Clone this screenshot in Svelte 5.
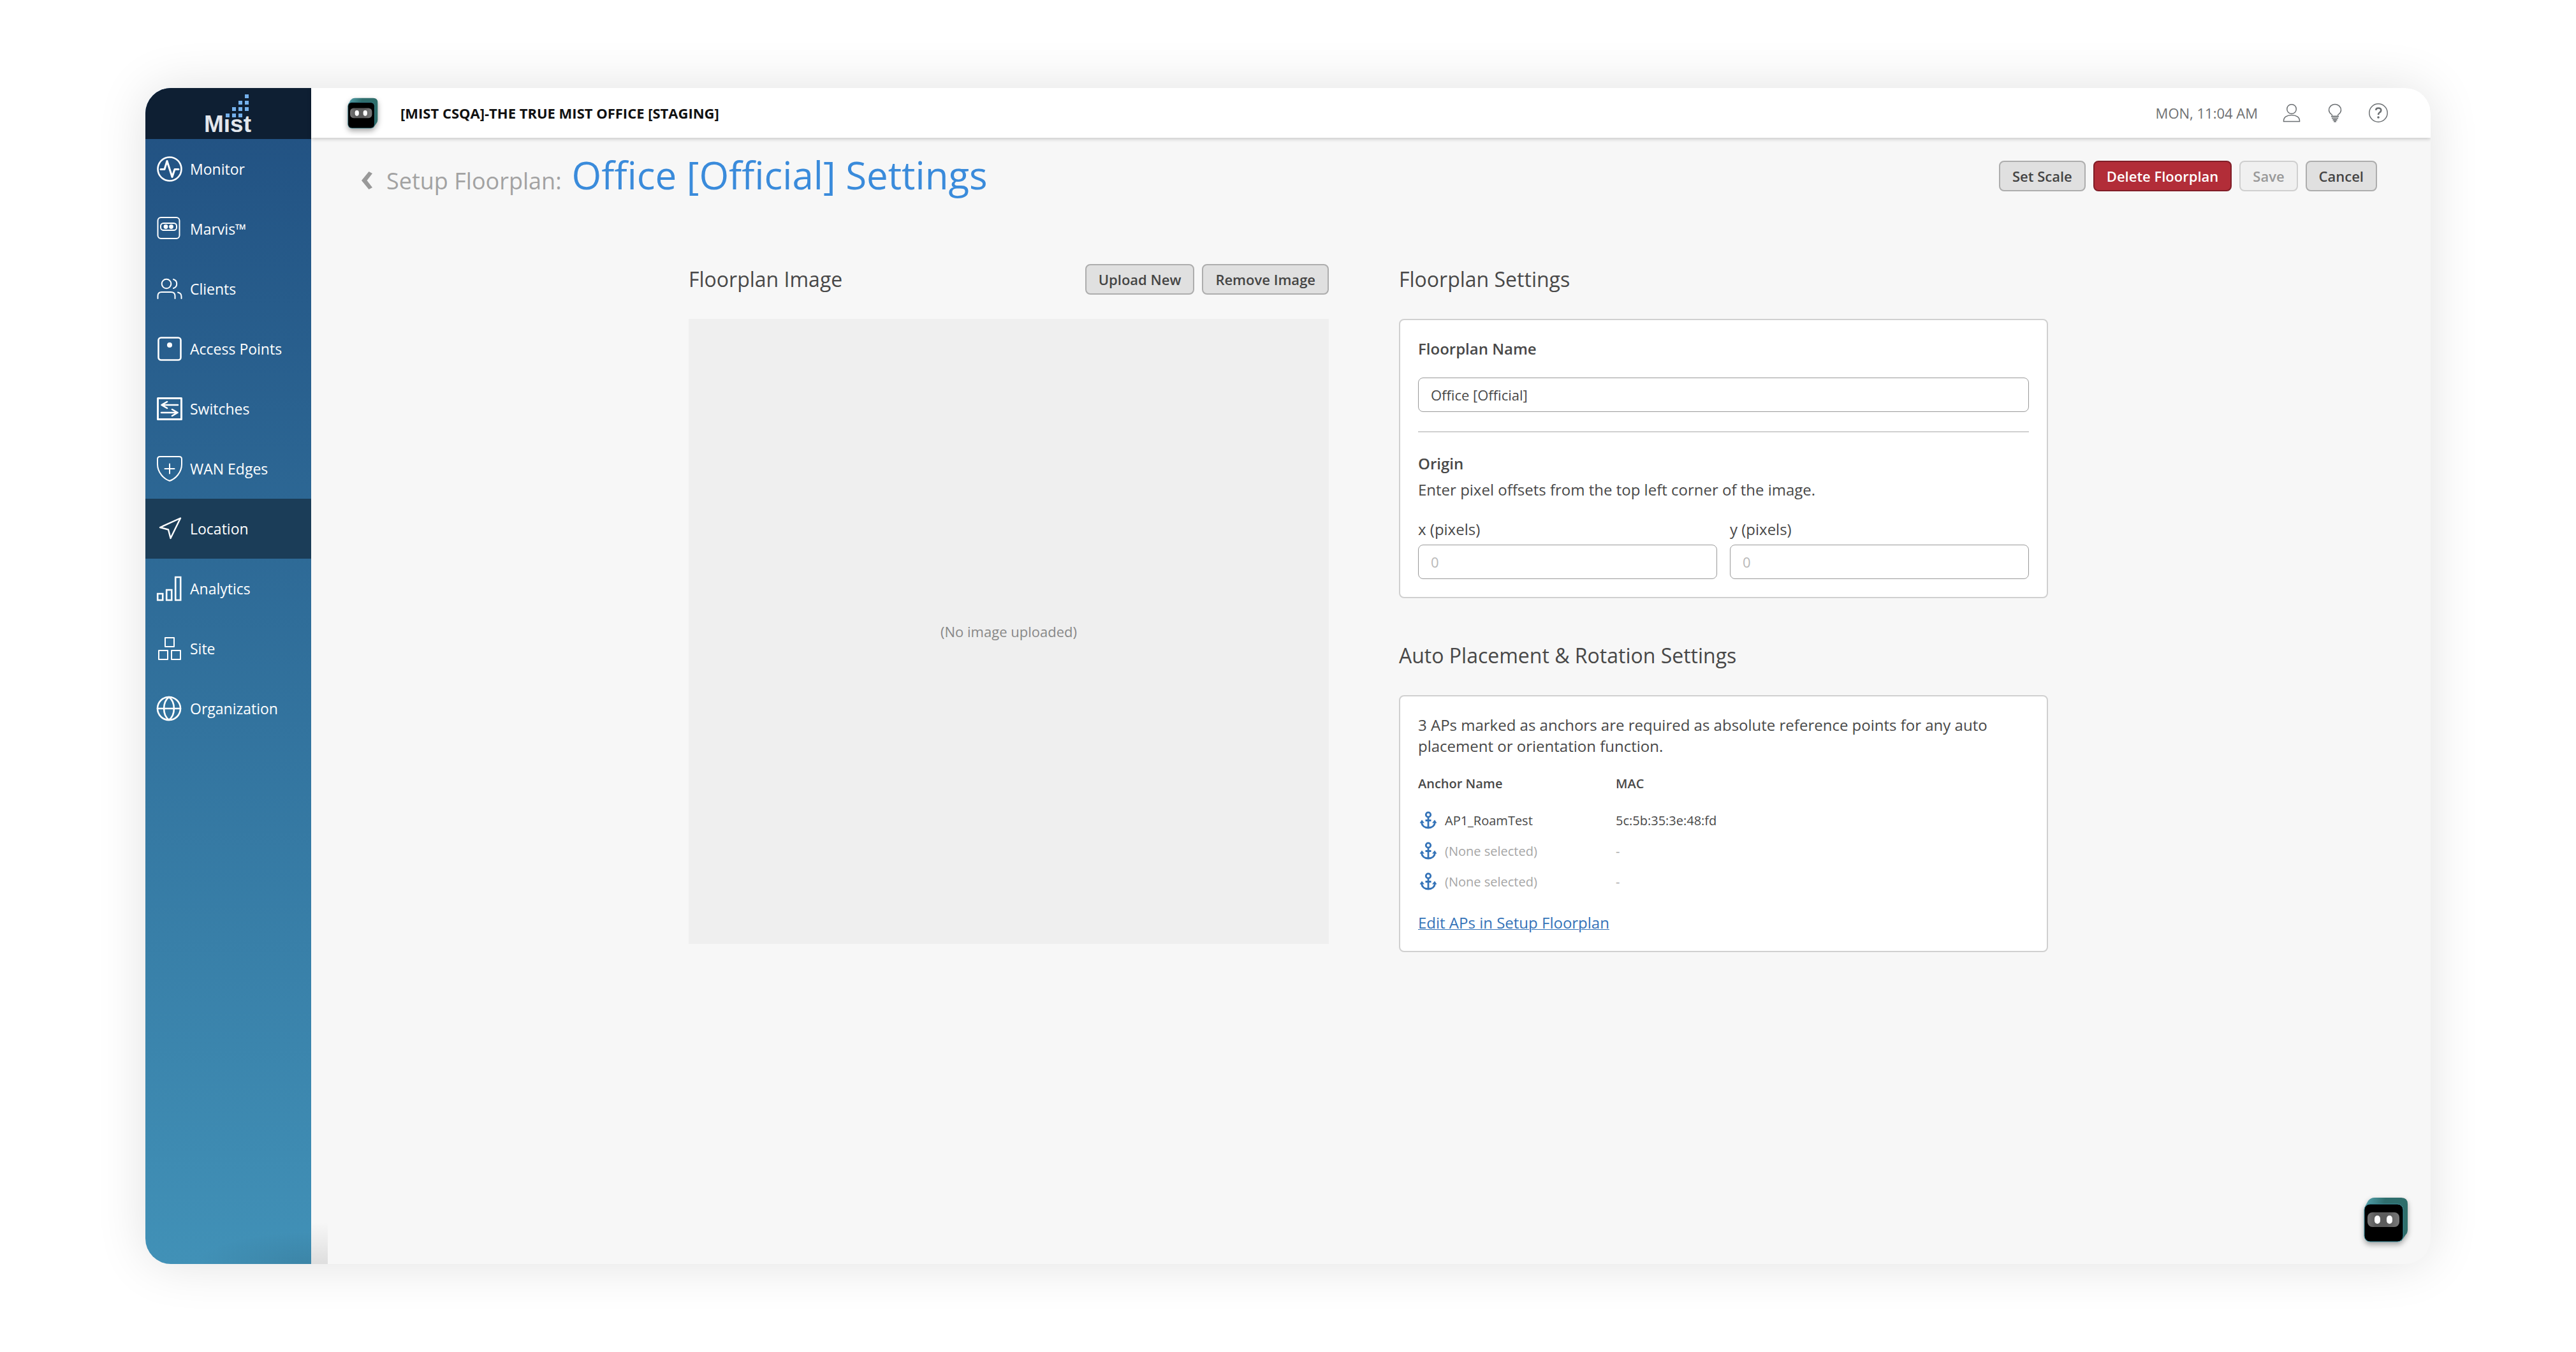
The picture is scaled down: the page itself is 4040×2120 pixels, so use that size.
<script>
  const nav = ['Monitor', 'Marvis™', 'Clients', 'Access Points', 'Switches', 'WAN Edges', 'Location', 'Analytics', 'Site', 'Organization'];
  const active = 'Location';
  const anchors = [
    { name: 'AP1_RoamTest', mac: '5c:5b:35:3e:48:fd' },
    { name: '', mac: '' },
    { name: '', mac: '' }
  ];
  // Centres of the blue squares rising out of the wordmark
  const dots = [[129, 43], [139, 43], [149, 43], [139, 33], [149, 33], [159, 33], [149, 23], [159, 23], [159, 13]];
  let floorplanName = $state('Office [Official]');
  let originX = $state('');
  let originY = $state('');
</script>

{#snippet robot(id)}
  <svg class="robot" viewBox="2 1 70 71" aria-hidden="true">
    <defs>
      <linearGradient id="{id}-side" x1="0" x2="1" y1="0" y2="0.3">
        <stop offset="0" stop-color="#56a5b0" /><stop offset="0.45" stop-color="#2f6e6e" /><stop offset="1" stop-color="#2f6e6a" />
      </linearGradient>
      <linearGradient id="{id}-visor" x1="0" x2="1" y1="0" y2="0">
        <stop offset="0" stop-color="#777" /><stop offset="0.25" stop-color="#5c5c5c" /><stop offset="0.6" stop-color="#5c5c5c" /><stop offset="1" stop-color="#7a7a7a" />
      </linearGradient>
    </defs>
    <path d="M4 16 L9 7 Q13 2 19 2 H61 Q71 2 71 12 V52 Q71 57 68 60 L61 70 Z" fill="url(#{id}-side)" />
    <rect x="3" y="12" width="61" height="59" rx="9" fill="#000" stroke="#3f94a4" />
    <rect x="8" y="25" width="50" height="23" rx="8" fill="url(#{id}-visor)" />
    <rect x="19" y="30" width="9" height="13" rx="5" fill="#fff" />
    <rect x="38" y="30" width="9" height="13" rx="5" fill="#fff" />
  </svg>
{/snippet}

{#snippet icon(name)}
  <svg class="icon" viewBox="0 0 40 40" fill="none" stroke="#fff" stroke-width="2" stroke-linecap="round" stroke-linejoin="round" aria-hidden="true">
    {#if name === 'Monitor'}
      <circle cx="20" cy="20" r="18.5" stroke-width="2.6" />
      <path d="M6 20.5H12L16 7.5L24 32.5L28 20.5H34" stroke-width="3" />
    {:else if name === 'Marvis™'}
      <rect x="1.5" y="2" width="34" height="33" rx="5" />
      <rect x="6" y="11" width="25" height="11" rx="4.5" />
      <circle cx="14" cy="16.5" r="3.4" fill="#fff" stroke="none" />
      <circle cx="22.5" cy="16.5" r="3.4" fill="#fff" stroke="none" />
    {:else if name === 'Clients'}
      <circle cx="15" cy="12" r="7.3" />
      <path d="M1.5 35V31Q1.500 25 7.500 25H22Q28.500 25 28.500 31V35M26 5A7.300 7.300 0 0 1 26 19M33 25.500Q38.500 26.500 38.500 32V35" />
    {:else if name === 'Access Points'}
      <rect x="2.5" y="2.5" width="35" height="35" rx="4" stroke-width="2.6" />
      <circle cx="20" cy="14" r="4" fill="#fff" stroke="none" />
    {:else if name === 'Switches'}
      <rect x="1.5" y="3.5" width="37" height="33" stroke-width="3" />
      <path d="M33 14H7.500M16 9L7.500 14L16 19M7 26H32.500M24 21L32.500 26L24 31" stroke-width="2.6" />
    {:else if name === 'WAN Edges'}
      <path d="M5 1H35Q39 1 39 5V13C39 26 29 36 20 39C11 36 1 26 1 13V5Q1 1 5 1Z" />
      <path d="M20 12.500V27.500M12.500 20H27.500" />
    {:else if name === 'Location'}
      <path d="M37 3.500L5 18L18 21.500L21.500 35Z" stroke-width="2.4" />
    {:else if name === 'Analytics'}
      <path d="M1.200 28H9.200V38H1.200ZM15.200 22H23.200V38H15.200ZM29.200 2H37.200V38H29.200Z" stroke-width="2.6" stroke-linejoin="miter" />
    {:else if name === 'Site'}
      <path d="M13 3H27V17H13ZM3 23H17V37H3ZM23 23H37V37H23Z" />
    {:else}
      <circle cx="19" cy="20" r="18" stroke-width="2.6" />
      <path d="M1 20H37M19 2C8.500 10 8.500 30 19 38M19 2C29.500 10 29.500 30 19 38" stroke-width="2.6" />
    {/if}
  </svg>
{/snippet}

<div class="page">
  <div class="window">
    <aside>
      <a class="brand" href="#home" aria-label="Mist home">
        <svg viewBox="0 0 260 80" aria-hidden="true">
          <text x="92" y="69" class="wordmark">Mist</text>
          <rect x="124" y="38" width="10" height="9" fill="#0e1f33" />
          {#each dots as [x, y]}
            <rect x={x - 3} y={y - 3} width="6" height="6" fill="#74b0ec" />
          {/each}
        </svg>
      </a>
      <nav>
        {#each nav as item}
          <a href="#{item}" class:active={item === active}>{@render icon(item)}<span>{item}</span></a>
        {/each}
      </nav>
    </aside>

    <div class="body">
      <header>
        {@render robot('org')}
        <strong>[MIST CSQA]-THE TRUE MIST OFFICE [STAGING]</strong>
        <div class="tools">
          <time>MON, 11:04 AM</time>
          <button class="tool" type="button" aria-label="Account">
            <svg viewBox="0 0 30 30"><circle cx="15" cy="9" r="7.300" /><path d="M2.500 28.500H27.500C28 21.500 22 18.500 15 18.500S2 21.500 2.500 28.500Z" /></svg>
          </button>
          <button class="tool" type="button" aria-label="Tips">
            <svg viewBox="0 0 30 30"><path d="M11 19C9 16.500 5.500 15 5.500 10.700A9.500 9.300 0 0 1 24.500 10.700C24.500 15 21 16.500 19 19" /><path d="M9 20.500H21M10 23.300H20M11.500 26H18.500M13 28.500H17" stroke-width="1.8" /></svg>
          </button>
          <button class="tool" type="button" aria-label="Help">
            <svg viewBox="0 0 30 30"><circle cx="15" cy="15" r="14.2" /><path d="M11 10.800Q11.500 7.500 15 7.500Q19.300 7.500 19.300 11Q19.300 13 16.800 14.500Q15 15.600 15 18" stroke-width="2.6" /><circle cx="15" cy="22" r="1.8" class="dot" /></svg>
          </button>
        </div>
      </header>

      <main>
        <div class="titlebar">
          <a class="back" href="#floorplan">
            <svg viewBox="0 0 20 28" aria-hidden="true"><path d="M14.500 0L20 3L11.500 14L20 25L14.500 28L3 14Z" fill="#999" /></svg>
            <span>Setup Floorplan:</span>
          </a>
          <h1>Office [Official] Settings</h1>
          <div class="actions">
            <button type="button" class="btn">Set Scale</button>
            <button type="button" class="btn danger">Delete Floorplan</button>
            <button type="button" class="btn" disabled>Save</button>
            <button type="button" class="btn">Cancel</button>
          </div>
        </div>

        <div class="columns">
          <section>
            <div class="head">
              <h2>Floorplan Image</h2>
              <div class="pair">
                <button type="button" class="btn">Upload New</button>
                <button type="button" class="btn">Remove Image</button>
              </div>
            </div>
            <div class="image">(No image uploaded)</div>
          </section>

          <div class="settings">
            <section>
              <div class="head"><h2>Floorplan Settings</h2></div>
              <form class="card">
                <label class="strong" for="floorplan-name">Floorplan Name</label>
                <input id="floorplan-name" type="text" bind:value={floorplanName} />
                <hr />
                <h3>Origin</h3>
                <p class="hint">Enter pixel offsets from the top left corner of the image.</p>
                <div class="fields">
                  <div>
                    <label for="origin-x">x (pixels)</label>
                    <input id="origin-x" type="text" placeholder="0" bind:value={originX} />
                  </div>
                  <div>
                    <label for="origin-y">y (pixels)</label>
                    <input id="origin-y" type="text" placeholder="0" bind:value={originY} />
                  </div>
                </div>
              </form>
            </section>

            <section>
              <div class="head"><h2>Auto Placement &amp; Rotation Settings</h2></div>
              <div class="card">
                <p>3 APs marked as anchors are required as absolute reference points for any auto placement or orientation function.</p>
                <table>
                  <thead>
                    <tr><th scope="col">Anchor Name</th><th scope="col">MAC</th></tr>
                  </thead>
                  <tbody>
                    {#each anchors as anchor}
                      <tr class:empty={!anchor.name}>
                        <td>
                          <div class="anchor">
                            <svg viewBox="0 0 28 28" fill="none" stroke="#3473b8" stroke-width="2.8" aria-hidden="true">
                              <circle cx="14" cy="5.500" r="3.700" />
                              <path d="M14 9V26M9.500 14.500H18.500M3.500 17.500C4 22.500 8 26 14 26S24 22.500 24.500 17.500" />
                              <path d="M0.500 18.500L4 13.500L8 18.500ZM20 18.500L24 13.500L27.500 18.500Z" fill="#3473b8" stroke="none" />
                            </svg>
                            {anchor.name || '(None selected)'}
                          </div>
                        </td>
                        <td>{anchor.mac || '-'}</td>
                      </tr>
                    {/each}
                  </tbody>
                </table>
                <a class="edit" href="#setup">Edit APs in Setup Floorplan</a>
              </div>
            </section>
          </div>
        </div>
      </main>
    </div>

    <div class="status-shade"></div>
    <button class="assistant" type="button" aria-label="Open Marvis assistant">{@render robot('chat')}</button>
  </div>
</div>

<style>
  :global(body) { background: #fff; }
  .page {
    box-sizing: border-box;
    display: flex;
    min-height: 100vh;
    padding: 138px 228px;
    font: 24px/33px "Open Sans", "Noto Sans", sans-serif;
    color: #484848;
  }
  .page :global(*) { box-sizing: border-box; }
  .page svg { display: block; flex: none; overflow: visible; }
  h1, h2, h3, p { margin: 0; }
  button, input { font: inherit; color: inherit; }

  .window {
    position: relative;
    display: flex;
    flex: 1;
    border-radius: 40px;
    overflow: hidden;
    background: #f7f7f7;
    box-shadow: 0 0 80px rgba(0, 0, 0, 0.12);
  }

  aside {
    flex: none;
    width: 260px;
    background:
      radial-gradient(ellipse 180px 50px at 100% 100%, rgba(30, 60, 70, 0.14), transparent),
      linear-gradient(#215081, #4191b7);
  }
  .brand { display: block; height: 80px; background: #0e1f33; }
  .wordmark { font: bold 37px "Liberation Sans", sans-serif; fill: #e3e7ec; }
  nav a {
    display: flex;
    align-items: center;
    gap: 12px;
    height: 94px;
    padding-left: 18px;
    color: #fff;
    font-size: 23px;
    font-weight: 500;
    text-decoration: none;
  }
  nav a.active { background: #1b3d58; }
  .icon { width: 40px; height: 40px; }

  .body { flex: 1; min-width: 0; }
  header {
    position: relative;
    display: flex;
    align-items: center;
    height: 78px;
    padding: 0 67px 0 57px;
    background: #fff;
    box-shadow: 0 2px 6px rgba(0, 0, 0, 0.2);
  }
  .robot { width: 100%; filter: drop-shadow(0 4px 4px rgba(0, 0, 0, 0.35)); }
  header .robot { width: 48px; }
  header strong { margin-left: 35px; color: #111; font-size: 22px; font-weight: 700; }
  .tools { display: flex; align-items: center; gap: 38px; margin-left: auto; }
  time { color: #6e7072; font-size: 22px; }
  .tool { width: 30px; padding: 0; border: 0; background: none; }
  .tool svg { fill: none; stroke: #6c7073; stroke-width: 1.5; }
  .tool .dot { fill: #6c7073; stroke: none; }

  main { padding: 16px 84px 60px 76px; }
  .titlebar { display: flex; align-items: baseline; height: 88px; }
  .back {
    display: flex;
    align-items: baseline;
    gap: 22px;
    color: #a2a2a2;
    font-size: 36px;
    text-decoration: none;
  }
  .back svg { width: 20px; height: 28px; }
  h1 { margin-left: 16px; color: #3a8bdb; font-size: 60px; font-weight: 400; line-height: 84px; }
  .actions { display: flex; align-self: center; gap: 12px; margin-left: auto; }
  .btn {
    height: 48px;
    padding: 0 19px;
    border: 2px solid #adadad;
    border-radius: 8px;
    background: #e0e0e0;
    color: #444;
    font-size: 22px;
    font-weight: 600;
    line-height: 30px;
    white-space: nowrap;
  }
  .btn.danger { border-color: #801d27; background: #b22d38; color: #fff; }
  .btn:disabled { border-color: #cfcfcf; background: #f0f0f0; color: #999; }

  .columns {
    display: grid;
    grid-template-columns: 1004fr 1018fr;
    gap: 110px;
    align-items: start;
    max-width: 2132px;
    margin: 94px auto 0;
  }
  .head { display: flex; align-items: center; height: 48px; margin-bottom: 38px; }
  h2 { font-size: 32px; font-weight: 400; line-height: 48px; }
  .pair { display: flex; gap: 12px; margin-left: auto; }
  .image {
    display: grid;
    place-items: center;
    height: 980px;
    background: #efefef;
    color: #888;
    font-size: 22px;
    font-weight: 500;
  }
  .settings { display: grid; gap: 66px; }
  .card {
    display: block;
    padding: 28px;
    border: 2px solid #d0d0d0;
    border-radius: 8px;
    background: #fff;
  }
  label { display: block; margin-bottom: 8px; }
  label.strong { margin-bottom: 29px; }
  label.strong, h3 { font-size: 24px; font-weight: 600; }
  input {
    display: block;
    width: 100%;
    height: 54px;
    padding: 0 19px;
    border: 1px solid #999;
    border-radius: 8px;
    background: #fff;
    font-size: 22px;
  }
  input::placeholder { color: #b8b8b8; opacity: 1; }
  hr { height: 2px; margin: 30px 0 32px; border: 0; background: #d0d0d0; }
  .hint { margin: 8px 0 29px; }
  .fields { display: grid; grid-template-columns: 1fr 1fr; gap: 20px; }

  table { width: 100%; margin: 18px 0 24px; border-collapse: collapse; table-layout: fixed; font-size: 20px; }
  th, td { height: 48px; padding: 0; text-align: left; }
  th { height: 58px; padding-bottom: 10px; font-weight: 600; }
  th:first-child { width: 310px; }
  .anchor { display: flex; align-items: center; gap: 12px; padding-left: 2px; }
  .anchor svg { width: 28px; height: 28px; }
  .empty { color: #a6a6a6; }
  .edit { color: #3473b8; text-decoration-thickness: 1px; }

  .status-shade {
    position: absolute;
    left: 260px;
    bottom: 0;
    width: 26px;
    height: 65px;
    background: linear-gradient(transparent, rgba(0, 0, 0, 0.1));
  }
  .assistant {
    position: absolute;
    right: 35px;
    bottom: 34px;
    width: 70px;
    padding: 0;
    border: 0;
    background: none;
  }
</style>
